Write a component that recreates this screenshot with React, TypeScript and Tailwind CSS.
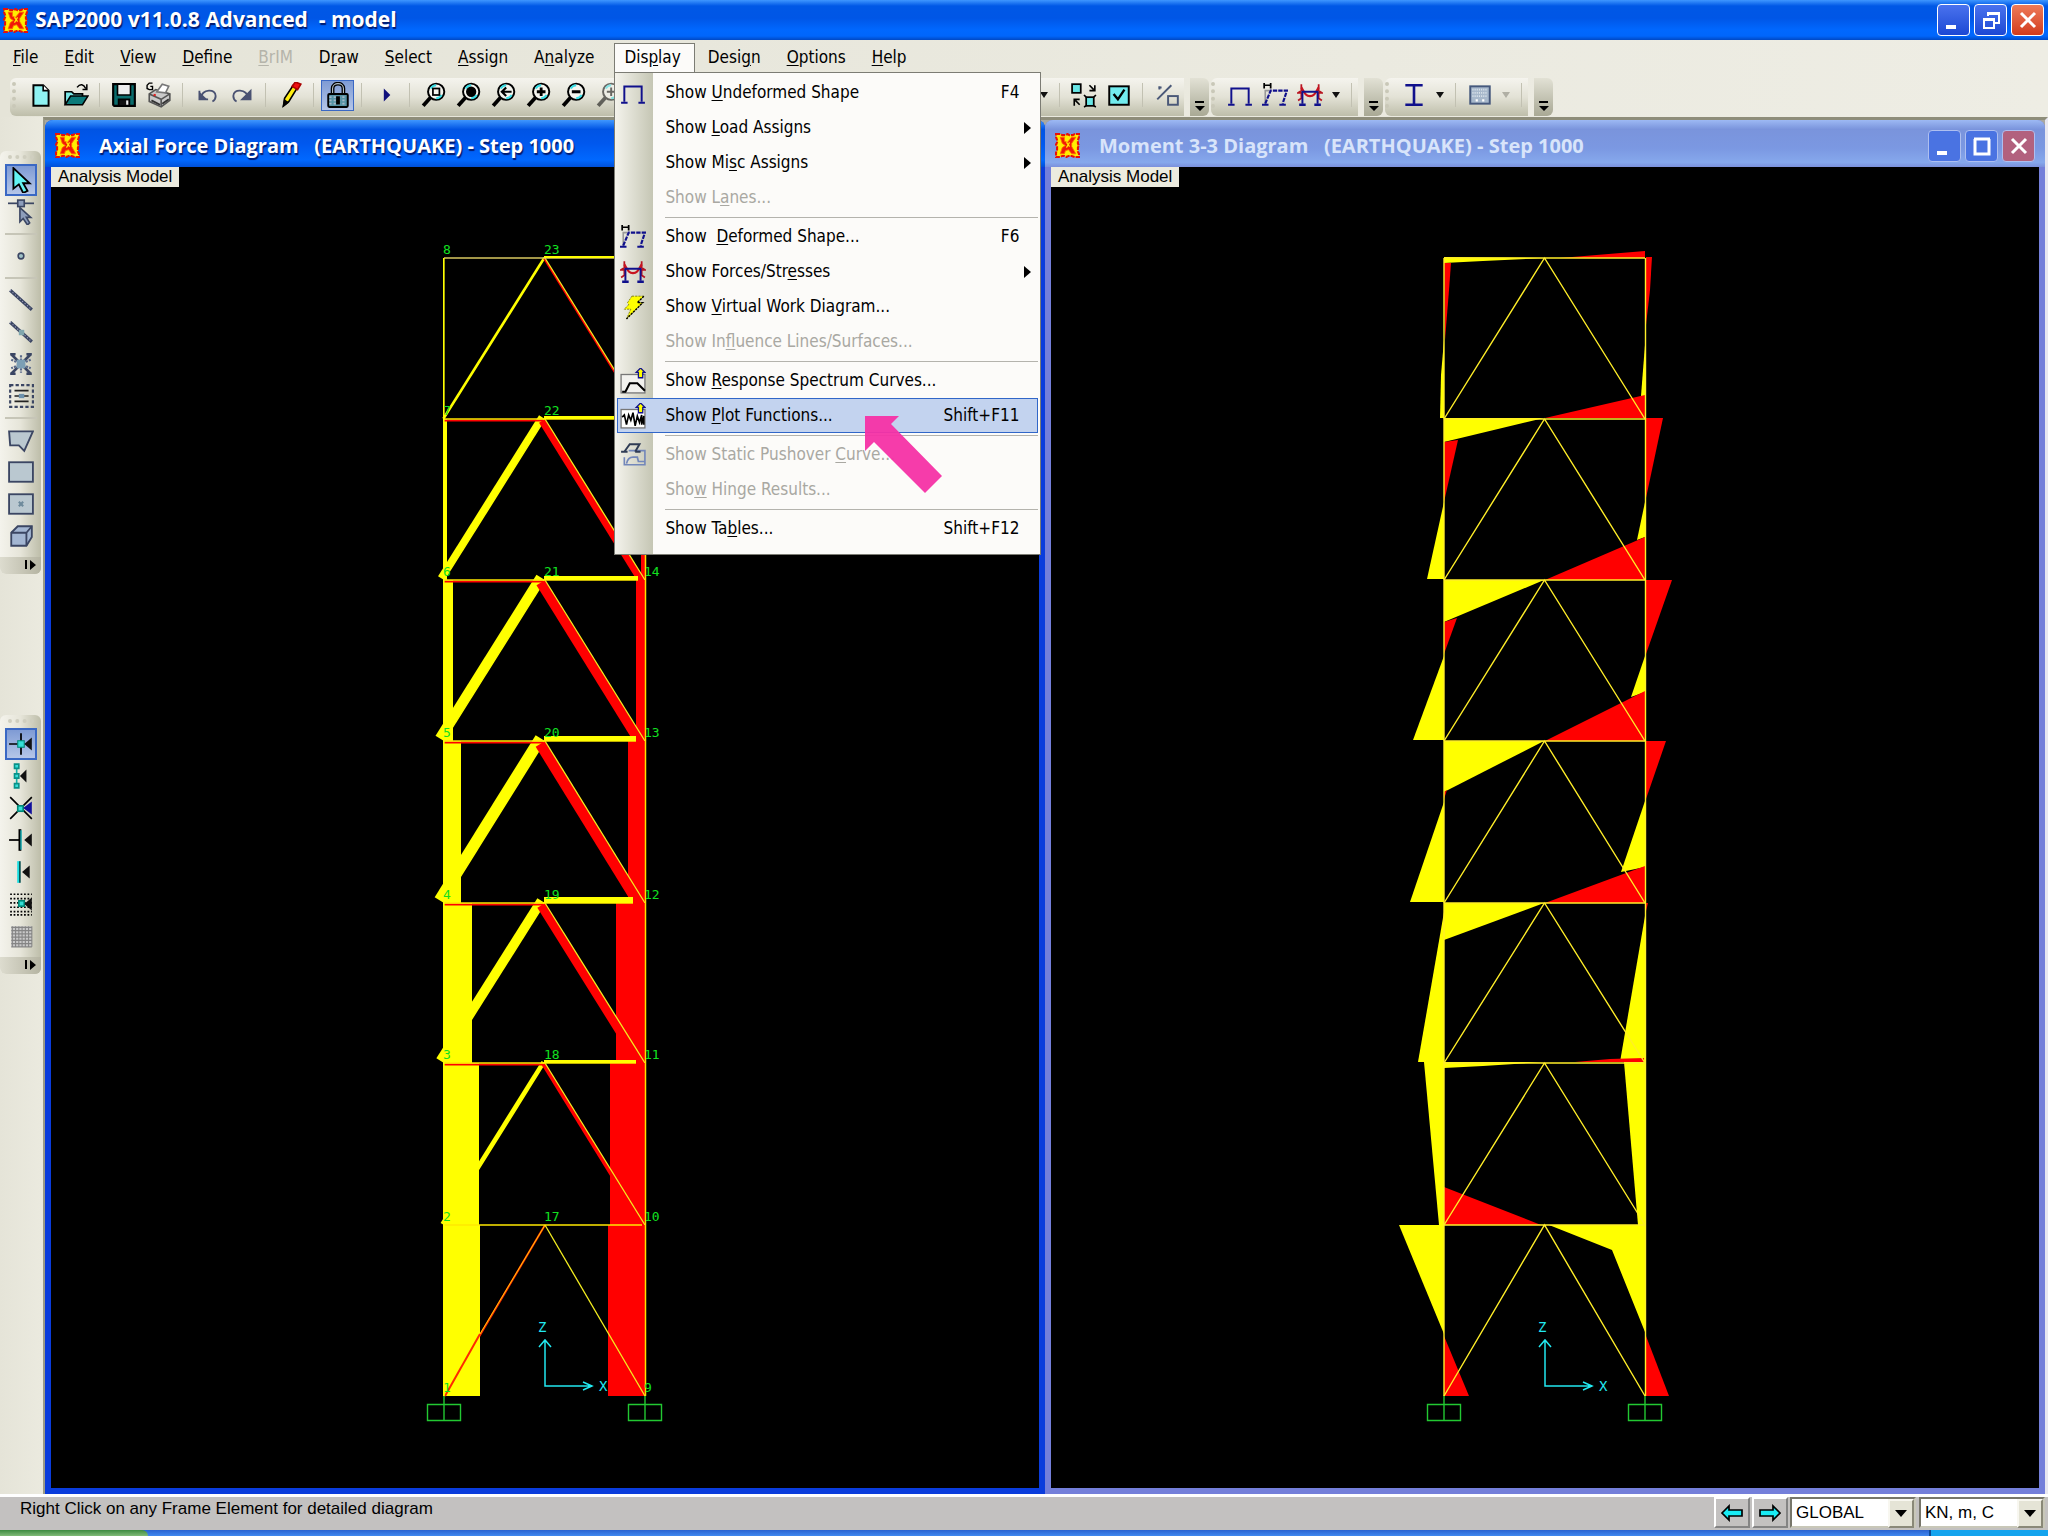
import type { ReactNode } from 'react'

type IconProps = { children: ReactNode; size?: number }

function Pix({ children, size = 26 }: IconProps) {
  return (
    <svg width={size} height={size} viewBox="0 0 24 24" fill="none" stroke="#000" strokeWidth="1.5" aria-hidden="true">
      {children}
    </svg>
  )
}

function AppLogo() {
  return (
    <svg width="25" height="25" viewBox="0 0 24 24" aria-hidden="true" className="shrink-0">
      <path
        d="M1 1h4l2 1h3l2-1 2 1h3l2-1h4v3l-1 3v3l1 2-1 2v4l1 2v3h-4l-3-1h-3l-2 1-2-1H7l-2 1H1v-4l1-3v-3l-1-2 1-2V7L1 4Z"
        fill="#ffee00"
        stroke="#e81008"
        strokeWidth="2"
        strokeDasharray="4 1"
      />
      <path d="M5 4h4v4l3 1 4-5h4l-4 6v3l4 7h-4l-3-4-3 1-1 3H5l2-6 3-2-3-2Z" fill="#f01808" stroke="#ff6a00" strokeWidth="0.8" />
      <path d="M11 9l3 4M14 9l-3 5" stroke="#ffee00" strokeWidth="1.2" />
    </svg>
  )
}

function Magnifier({ children, faded }: { children?: ReactNode; faded?: boolean }) {
  return (
    <Pix>
      <g opacity={faded ? 0.55 : 1}>
        <path d="M9 14 2 22" strokeWidth="3.4" />
        <circle cx="14" cy="9" r="7.5" fill="#f4f4ee" strokeWidth="1.8" />
        <path d="M9 6a6 6 0 0 1 5-3M19 12a6 6 0 0 1-5 3" stroke="#38dfe6" strokeWidth="2" />
        {children}
      </g>
    </Pix>
  )
}

function FrameIcon() {
  return (
    <Pix>
      <path d="M4 20V6h16v14" stroke="#10108c" strokeWidth="1.8" />
      <path d="M1 21h6M17 21h6" stroke="#10108c" strokeWidth="2" />
    </Pix>
  )
}

function DeformedIcon() {
  return (
    <Pix>
      <path d="M2 1v5M8 1v5M2 3h6" strokeWidth="1.6" />
      <path d="M3 20V8h4" stroke="#999" />
      <path d="M3 20 8 8h15l-4 12" stroke="#10108c" strokeWidth="2" strokeDasharray="4 1" />
      <path d="M0 21h6M16 21h6" stroke="#10108c" strokeWidth="2" />
    </Pix>
  )
}

function ForcesIcon() {
  return (
    <Pix>
      <path d="M4 2v6l-3 2h3v5l-3 2M20 2v6l3 2h-3v5l3 2" stroke="#b81420" strokeWidth="1.6" />
      <path d="M4 5c3 5 4 8 8 8s5-3 8-8" stroke="#c81420" strokeWidth="2" />
      <path d="M5 20V9h14v11" stroke="#10108c" strokeWidth="1.8" />
      <path d="M2 21h6M16 21h6" stroke="#10108c" strokeWidth="2.2" />
    </Pix>
  )
}

function BoltIcon() {
  return (
    <Pix>
      <path d="M11 2h11l-6 6h5L6 23l4-9H4l4-4-1-2Z" fill="#ffff00" stroke="#777700" strokeWidth="0.8" strokeDasharray="2 1" />
      <path d="m22 2-6 6h5L6 23" strokeWidth="1.3" strokeDasharray="2 1" />
    </Pix>
  )
}

function ChartArrow() {
  return <path d="m19 0 4 4h-2v5h-4V4h-2Z" fill="#ffff00" stroke="#10108c" strokeWidth="1.2" />
}

function SpectrumIcon() {
  return (
    <Pix>
      <rect x="1" y="6" width="22" height="17" fill="#f2f2ee" stroke="#777" strokeWidth="1.2" />
      <path d="M2 22h3l4-8h7l7 7" strokeWidth="1.9" />
      <ChartArrow />
    </Pix>
  )
}

function PlotIcon() {
  return (
    <Pix>
      <rect x="1" y="6" width="22" height="17" fill="#fff" stroke="#777" strokeWidth="1.2" />
      <path d="m2 13 2-2 2 9 2-9 2 5 2-7 2 12 2-9 2 6 2-7v9l2-8v8" strokeWidth="1.5" />
      <ChartArrow />
    </Pix>
  )
}

function PushoverIcon() {
  return (
    <Pix>
      <path d="M8 8h15v13H4v-7" stroke="#7387ba" strokeWidth="1.5" />
      <path d="M6 20c1-5 4-6 6-6h4l1 4h6" stroke="#7387ba" strokeWidth="1.6" />
      <path d="M1 9h6M14 9h5M4 9l5-7h9l-4 7" stroke="#303c55" strokeWidth="1.8" />
    </Pix>
  )
}

const newIcon = (
  <Pix>
    <path d="M5 3h9l5 5v14H5Z" fill="#8ff2f2" strokeWidth="1.8" />
    <path d="M14 3v5h5" fill="#fff" strokeWidth="1.5" />
  </Pix>
)
const openIcon = (
  <Pix>
    <path d="M2 21V9h6l2 2h8v3" fill="#7be8e8" strokeWidth="1.6" />
    <path d="m2 21 5-8h16l-5 8Z" fill="#0b7a7a" strokeWidth="1.4" />
    <path d="M13 5c3-4 6-3 8 1M22 2v5h-4" strokeWidth="1.4" />
  </Pix>
)
const saveIcon = (
  <Pix>
    <path d="M2 2h20v20H3l-1-1Z" fill="#0a6c6c" strokeWidth="2" />
    <path d="M6 2h12v10H6Z" fill="#eee" />
    <path d="M7 16h10v6H7Z" fill="#111" />
    <path d="M14 17h2v4h-2Z" fill="#eee" stroke="none" />
  </Pix>
)
const printIcon = (
  <Pix>
    <path d="M3 11 9 7l13 4v6l-8 6-11-5Z" fill="#c9c9c9" stroke="#555" />
    <path d="m3 11 11 5 8-5M14 16v7" stroke="#555" />
    <path d="m10 9 5-7 6 2-3 6Z" fill="#fff" stroke="#777" />
    <path d="M6 1H3L1 3v3l2 1h3V4H4" strokeWidth="1.3" />
    <path d="M5 17l8 4M15 20l6-4" stroke="#333" strokeWidth="1.7" />
    <path d="M7 12h2" stroke="#e02020" strokeWidth="2" />
  </Pix>
)
const undoIcon = (
  <Pix>
    <path d="M5 8v8h8M6 15c2-9 14-9 14-2 0 2-1 4-3 5" stroke="#4a5272" strokeWidth="1.7" />
    <path d="M5 9v7h7Z" fill="#4a5272" stroke="none" />
  </Pix>
)
const redoIcon = (
  <Pix>
    <path d="M18 15C16 6 4 6 4 13c0 2 1 4 3 5" stroke="#4a5272" strokeWidth="1.7" />
    <path d="M20 8v8h-8Z" fill="#4a5272" stroke="#4a5272" />
  </Pix>
)
const pencilIcon = (
  <Pix>
    <path d="m6 22 1-7 8-12 4 2-8 13Z" fill="#ffee10" strokeWidth="1.5" />
    <path d="m14 4 3-4 5 2-3 5Z" fill="#f01010" stroke="#a00" />
    <path d="m6 22 1-5 3 2Z" fill="#000" />
  </Pix>
)
const lockIcon = (
  <Pix>
    <path d="M7 11V6c0-6 10-6 10 0v5" strokeWidth="3.4" />
    <path d="M7 11V6c0-6 10-6 10 0v5" stroke="#b8c4cc" strokeWidth="1" />
    <rect x="3" y="11" width="18" height="12" rx="1" fill="#5794a6" strokeWidth="1.8" />
    <path d="M4 14h16M4 17h16M4 20h16" stroke="#a5b7c8" strokeDasharray="2 2" />
    <path d="M11 14h2v6h-2Z" fill="#000" />
  </Pix>
)
const runIcon = (
  <Pix>
    <path d="m10 6 6 6-6 6Z" fill="#10107c" stroke="none" />
  </Pix>
)
const shrinkIcon = (
  <Pix>
    <rect x="1" y="2" width="8" height="8" fill="#68e6e6" strokeWidth="1.6" />
    <rect x="14" y="14" width="7" height="8" fill="#68e6e6" strokeWidth="1.6" />
    <path d="M17 3l4 4M22 3v5h-5M12 12l2 2M21 14l2-2M12 23l2-1M21 22l2 1M8 21l-4-4M3 22v-6h5" strokeWidth="1.5" />
  </Pix>
)
const checkIcon = (
  <Pix>
    <rect x="3" y="4" width="18" height="17" fill="#72ecef" strokeWidth="1.8" />
    <path d="m7 11 4 5 6-9" strokeWidth="2.2" />
  </Pix>
)
const percentIcon = (
  <Pix>
    <path d="M3 16 16 3M4 5h3M5 4v3" stroke="#4a5878" strokeWidth="1.8" />
    <rect x="13" y="13" width="9" height="8" stroke="#4a5878" strokeWidth="1.8" />
  </Pix>
)
const beamIcon = (
  <Pix>
    <path d="M4 3h16M4 21h16M12 3v18" stroke="#10108c" strokeWidth="2.4" />
  </Pix>
)
const sectionIcon = (
  <Pix>
    <rect x="3" y="4" width="18" height="16" fill="#a7b8cb" stroke="#45587c" strokeWidth="1.8" />
    <path d="M5 7h14M5 10h14M5 13h14" stroke="#d9e2ea" strokeDasharray="1 1" />
    <path d="M8 17h2M14 17h2" stroke="#fff" strokeWidth="2" />
  </Pix>
)

const slate = '#3b4663'

const drawTools: (ReactNode | '|')[] = [
  <Pix key="pointer">
    <path d="M5 1v19l5-4 4 8 4-2-4-7h6Z" fill="#62f3f3" strokeWidth="1.7" />
  </Pix>,
  <Pix key="reshape">
    <path d="M0 4h24" stroke={slate} strokeWidth="1.6" />
    <rect x="9" y="1" width="6" height="6" fill="#8d9dbb" stroke={slate} />
    <path d="M11 8v13l3-3 4 6 2-2-3-5h4Z" fill="#8d9dbb" stroke={slate} />
  </Pix>,
  '|',
  <Pix key="joint">
    <circle cx="12" cy="12" r="2.6" fill="#9fc0c6" stroke={slate} />
  </Pix>,
  '|',
  <Pix key="frame">
    <path d="m2 3 20 18" stroke={slate} strokeWidth="3" />
    <path d="m2 3 20 18" stroke="#a7a5c4" strokeWidth="1" strokeDasharray="1 2" />
  </Pix>,
  <Pix key="quick-frame">
    <path d="m2 3 20 18" stroke={slate} strokeWidth="3" />
    <path d="m2 3 20 18" stroke="#a7a5c4" strokeWidth="1" strokeDasharray="1 2" />
    <rect x="10" y="10" width="5" height="5" fill="#80a6ae" stroke="none" />
  </Pix>,
  <Pix key="brace">
    <path d="m3 3 18 18M21 3 3 21M2 3h5M17 3h5M2 21h5M17 21h5" stroke={slate} strokeWidth="2.4" />
    <path d="M12 4v16M3 8l18 8M21 8 3 16" stroke="#5a6a8a" strokeWidth="2" strokeDasharray="2 1" />
    <rect x="8" y="8" width="8" height="8" fill="#7c9fb5" stroke="none" />
  </Pix>,
  <Pix key="beams">
    <rect x="2" y="2" width="21" height="20" stroke={slate} strokeWidth="2" strokeDasharray="3 2" />
    <path d="M6 7h13M6 12h13M6 17h13" stroke="#222" strokeWidth="1.5" />
    <rect x="10" y="10" width="5" height="4" fill="#6d92ad" stroke="none" />
  </Pix>,
  '|',
  <Pix key="poly">
    <path d="M1 4h22l-8 18-5-5H2Z" fill="#bac8d0" stroke={slate} strokeWidth="1.7" />
  </Pix>,
  <Pix key="rect">
    <rect x="1" y="3" width="22" height="18" fill="#bac8d0" stroke={slate} strokeWidth="1.7" />
  </Pix>,
  <Pix key="quick-area">
    <rect x="1" y="3" width="22" height="18" fill="#bac8d0" stroke={slate} strokeWidth="1.7" />
    <path d="m10 10 4 4M14 10l-4 4" stroke="#6e8a9c" strokeWidth="2" />
  </Pix>,
  <Pix key="solid">
    <path d="M3 9 9 3h13v10l-5 8H3Z" fill="#a3b6d2" stroke={slate} strokeWidth="1.7" />
    <path d="M3 9h14v12M17 9l5-6" stroke={slate} strokeWidth="1.7" />
  </Pix>,
]

const snapArrow = <path d="m15 12 7-6v12Z" fill="#111" stroke="none" />

const snapTools: ReactNode[] = [
  <Pix key="points">
    <path d="M1 12h8M12 2v20" strokeWidth="1.6" />
    <rect x="9" y="9" width="6" height="6" fill="#35e0d8" stroke="#087" strokeWidth="1" />
    {snapArrow}
  </Pix>,
  <Pix key="ends">
    <path d="M8 2v20" stroke="#12b0a8" strokeWidth="1.5" />
    <path d="M6 1h4v4H6ZM6 10h4v4H6ZM6 19h4v4H6Z" fill="#35e0d8" stroke="#0a9088" />
    <path d="m11 12 6-6v12Z" fill="#111" stroke="none" />
  </Pix>,
  <Pix key="intersections">
    <path d="m2 2 20 20M22 2 2 22" strokeWidth="1.5" />
    <rect x="9" y="10" width="5" height="5" fill="#35e0d8" stroke="#087" />
    <path d="m14 12 8-6v12Z" fill="#10109c" stroke="none" />
  </Pix>,
  <Pix key="perpendicular">
    <path d="M1 12h10" strokeWidth="1.6" />
    <path d="M11 2v20" strokeWidth="2.6" />
    <path d="M12 3v18" stroke="#12c0c8" strokeWidth="1.2" />
    {snapArrow}
  </Pix>,
  <Pix key="lines">
    <path d="M10 2v20" stroke="#18dde0" strokeWidth="3" />
    <path d="M11 2v20" strokeWidth="1" />
    <path d="m13 12 7-6v12Z" fill="#111" stroke="none" />
  </Pix>,
  <Pix key="fine">
    <path d="M2 3h20M2 7h20M2 11h20M2 15h20M2 19h20M2 22h20" strokeWidth="1.6" strokeDasharray="1.6 1.6" />
    <rect x="10" y="9" width="5" height="5" fill="#35e0d8" stroke="#087" />
    {snapArrow}
  </Pix>,
  <Pix key="grid">
    <rect x="3" y="3" width="19" height="19" fill="#c9c9c9" stroke="none" />
    <path d="M3 4h19M3 7h19M3 10h19M3 13h19M3 16h19M3 19h19M3 22h19M4 3v19M7 3v19M10 3v19M13 3v19M16 3v19M19 3v19M22 3v19" stroke="#858585" strokeWidth="1" />
  </Pix>,
]

function Mnemonic({ label }: { label: string }) {
  const at = label.indexOf('&')
  if (at < 0) return <span className="whitespace-pre">{label}</span>
  return (
    <span className="whitespace-pre">
      {label.slice(0, at)}
      <span className="underline underline-offset-2">{label[at + 1]}</span>
      {label.slice(at + 2)}
    </span>
  )
}

type MenuEntry = { label: string; shortcut?: string; icon?: ReactNode; sub?: boolean; off?: boolean; active?: boolean } | '|'

const displayMenu: MenuEntry[] = [
  { label: 'Show &Undeformed Shape', shortcut: 'F4', icon: <FrameIcon /> },
  { label: 'Show &Load Assigns', sub: true },
  { label: 'Show Mi&sc Assigns', sub: true },
  { label: 'Show L&anes...', off: true },
  '|',
  { label: 'Show  &Deformed Shape...', shortcut: 'F6', icon: <DeformedIcon /> },
  { label: 'Show Forces/Str&esses', sub: true, icon: <ForcesIcon /> },
  { label: 'Show &Virtual Work Diagram...', icon: <BoltIcon /> },
  { label: 'Show In&fluence Lines/Surfaces...', off: true },
  '|',
  { label: 'Show &Response Spectrum Curves...', icon: <SpectrumIcon /> },
  { label: 'Show &Plot Functions...', shortcut: 'Shift+F11', icon: <PlotIcon />, active: true },
  '|',
  { label: 'Show Static Pushover &Curve...', icon: <PushoverIcon />, off: true },
  { label: 'Sho&w Hinge Results...', off: true },
  '|',
  { label: 'Show Ta&bles...', shortcut: 'Shift+F12' },
]

function DisplayMenu() {
  return (
    <div className="absolute top-full left-[-1px] z-20 w-[427px] border border-[#7c7c74] bg-[linear-gradient(90deg,#f4f3ec_0px,#c5c6b4_38px,#fcfbf9_38px)] pt-[2px] pb-[8px]">
      {displayMenu.map((entry, i) =>
        entry === '|' ? (
          <div key={i} className="mt-[2px] mr-[2px] mb-px ml-[50px] h-px bg-[#b4b3ad]" />
        ) : (
          <button
            key={i}
            type="button"
            disabled={entry.off}
            className={`mx-[2px] flex h-[35px] w-[421px] items-center border text-left ${
              entry.active ? 'border-[#3166c8] bg-[#c3d3ef]' : 'border-transparent'
            } ${entry.off ? 'text-[#a9a8a2]' : 'text-black'}`}
          >
            <span className="flex w-[47px] shrink-0 pl-[2px]">{entry.icon}</span>
            <Mnemonic label={entry.label} />
            {entry.shortcut && <span className="ml-auto pr-[18px]">{entry.shortcut}</span>}
            {entry.sub && (
              <svg width="7" height="12" viewBox="0 0 7 12" className="mr-[6px] ml-auto" aria-hidden="true">
                <path d="M0 0v12l7-6Z" />
              </svg>
            )}
          </button>
        ),
      )}
      <svg width="78" height="78" viewBox="0 0 78 78" className="pointer-events-none absolute top-[343px] left-[250px]" aria-hidden="true">
        <path d="M0 0h34l-8 8 51 52-17 17L9 26 0 35Z" fill="#f531a5" opacity="0.95" />
      </svg>
    </div>
  )
}

const menusBefore = ['&File', '&Edit', '&View', '&Define', '&BrIM', 'D&raw', '&Select', '&Assign', 'A&nalyze']
const menusAfter = ['Desi&gn', '&Options', '&Help']

function MenuButton({ label }: { label: string }) {
  const off = label === '&BrIM'
  return (
    <button type="button" disabled={off} className={`px-[13px] ${off ? 'text-[#b5b4aa]' : 'text-black'}`}>
      <Mnemonic label={label} />
    </button>
  )
}

function MenuBar() {
  return (
    <nav className="flex h-[38px] bg-[linear-gradient(90deg,#e5e4d8,#eeede4)] pt-[3px] pb-[6px]">
      {menusBefore.map((m) => (
        <MenuButton key={m} label={m} />
      ))}
      <div className="relative ml-[7px] flex border border-b-0 border-[#7c7c74] bg-[#fcfbf9]">
        <button type="button" aria-expanded="true" className="pr-[13px] pl-[9px]">
          <Mnemonic label="Dis&play" />
        </button>
        <DisplayMenu />
      </div>
      {menusAfter.map((m) => (
        <MenuButton key={m} label={m} />
      ))}
    </nav>
  )
}

function ToolButton({ label, active, children }: { label: string; active?: boolean; children: ReactNode }) {
  return (
    <button
      type="button"
      aria-label={label}
      className={`mx-px flex h-[31px] w-[33px] shrink-0 items-center justify-center ${
        active ? 'border border-[#3a68c4] bg-linear-to-b from-[#7f9bd4] to-[#b5c6e8]' : ''
      }`}
    >
      {children}
    </button>
  )
}

function Caret({ faded }: { faded?: boolean }) {
  return (
    <svg width="18" height="8" viewBox="0 0 18 8" className="shrink-0" aria-hidden="true">
      <path d="M5 1h8L9 7Z" fill={faded ? '#b0afa4' : '#111'} />
    </svg>
  )
}

function Sep() {
  return <div className="mx-[6px] h-[24px] w-px shrink-0 bg-[#c2c1b2]" />
}

function Grip() {
  return <div className="mr-[4px] h-[26px] w-[7px] shrink-0 border-l-4 border-dotted border-[#c9c8b8]" />
}

function Overflow() {
  return (
    <button type="button" aria-label="Toolbar options" className="ml-[6px] flex w-[19px] shrink-0 items-end justify-center self-stretch rounded-r-md bg-linear-to-b from-[#e2e1d5] to-[#a9a995] pb-[4px]">
      <svg width="12" height="12" viewBox="0 0 12 12" aria-hidden="true">
        <path d="M1 1h9v2H1ZM1 6h10l-5 5Z" />
      </svg>
    </button>
  )
}

const strip = 'flex h-[38px] items-center rounded-l-md bg-linear-to-b from-[#f5f4ee] via-[#e3e2d6] to-[#bebeaa] pb-[4px]'

function Toolbars() {
  return (
    <div className="flex h-[39px] overflow-hidden bg-[linear-gradient(90deg,#e5e4d8,#eeede4)] pl-[10px]">
      <div className={`${strip} pl-[2px]`}>
        <Grip />
        <ToolButton label="New model">{newIcon}</ToolButton>
        <ToolButton label="Open">{openIcon}</ToolButton>
        <Sep />
        <ToolButton label="Save">{saveIcon}</ToolButton>
        <ToolButton label="Print graphics">{printIcon}</ToolButton>
        <Sep />
        <ToolButton label="Undo">{undoIcon}</ToolButton>
        <ToolButton label="Redo">{redoIcon}</ToolButton>
        <Sep />
        <ToolButton label="Refresh window">{pencilIcon}</ToolButton>
        <Sep />
        <ToolButton label="Lock model" active>
          {lockIcon}
        </ToolButton>
        <Sep />
        <ToolButton label="Run analysis">{runIcon}</ToolButton>
        <Sep />
        <ToolButton label="Rubber band zoom">
          <Magnifier>
            <rect x="11" y="6" width="6" height="6" strokeWidth="1.6" />
          </Magnifier>
        </ToolButton>
        <ToolButton label="Restore full view">
          <Magnifier>
            <circle cx="14" cy="9" r="4" fill="#000" />
          </Magnifier>
        </ToolButton>
        <ToolButton label="Previous zoom">
          <Magnifier>
            <path d="M10 9h9M14 5l-4 4 4 4" strokeWidth="2" />
          </Magnifier>
        </ToolButton>
        <ToolButton label="Zoom in">
          <Magnifier>
            <path d="M10 9h8M14 5v8" strokeWidth="2.6" />
          </Magnifier>
        </ToolButton>
        <ToolButton label="Zoom out">
          <Magnifier>
            <path d="M10 9h8" strokeWidth="2.8" />
          </Magnifier>
        </ToolButton>
        <ToolButton label="Pan">
          <Magnifier faded>
            <path d="M10 9h8M14 5v8" strokeWidth="1.8" />
          </Magnifier>
        </ToolButton>
        <div className="w-[409px] shrink-0" />
        <Caret />
        <Sep />
        <ToolButton label="Shrink objects">{shrinkIcon}</ToolButton>
        <ToolButton label="Display options">{checkIcon}</ToolButton>
        <Sep />
        <ToolButton label="Assign to group">{percentIcon}</ToolButton>
      </div>
      <div className="flex pb-px">
        <Overflow />
      </div>
      <div className={`${strip} ml-[2px]`}>
        <Grip />
        <ToolButton label="Show undeformed shape">
          <FrameIcon />
        </ToolButton>
        <ToolButton label="Show deformed shape">
          <DeformedIcon />
        </ToolButton>
        <ToolButton label="Show forces">
          <ForcesIcon />
        </ToolButton>
        <Caret />
        <Sep />
      </div>
      <div className="flex pb-px">
        <Overflow />
      </div>
      <div className={`${strip} ml-[2px]`}>
        <Grip />
        <ToolButton label="Steel design">{beamIcon}</ToolButton>
        <Caret />
        <Sep />
        <ToolButton label="Concrete design">{sectionIcon}</ToolButton>
        <Caret faded />
        <Sep />
      </div>
      <div className="flex pb-px">
        <Overflow />
      </div>
    </div>
  )
}

function SideStrip({ tools, name }: { tools: (ReactNode | '|')[]; name: string }) {
  return (
    <div role="toolbar" aria-label={name} className="flex w-[41px] flex-col items-center rounded-md bg-linear-to-r from-[#f4f3ec] via-[#e6e5d9] to-[#bdbda9]">
      <div className="mt-[4px] mb-[5px] h-[4px] w-[26px] border-t-4 border-dotted border-[#cfcebf]" />
      {tools.map((tool, i) =>
        tool === '|' ? (
          <div key={i} className="my-[5px] h-[2px] w-[32px] bg-[#c6c5b7]" />
        ) : (
          <button
            key={i}
            type="button"
            aria-label={`${name} ${i + 1}`}
            className={`flex h-[32px] w-[32px] items-center justify-center ${
              i === 0 ? 'border-2 border-[#3a68c4] bg-linear-to-b from-[#7f9bd4] to-[#b5c6e8]' : ''
            }`}
          >
            {tool}
          </button>
        ),
      )}
      <div className="mt-[5px] flex h-[17px] w-full justify-end rounded-b-md bg-linear-to-r from-[#dddccf] to-[#b5b4a2] pt-[3px] pr-[4px]">
        <svg width="12" height="10" viewBox="0 0 12 10" aria-hidden="true">
          <path d="M0 0h2v9H0ZM5 0v10l6-5Z" />
        </svg>
      </div>
    </div>
  )
}

const LEFT = 444
const MID = 545
const RIGHT = 645
const levels = [258, 419, 580, 741, 903, 1063, 1225, 1396]

// Bays run from the roof to the base
const axial = [
  { col: 0, red: 0, beam: 2, beamEnd: 645, brace: 2 },
  { col: 3, red: 4, beam: 3, beamEnd: 642, brace: 7 },
  { col: 9, red: 9, beam: 4, beamEnd: 638, brace: 10 },
  { col: 17, red: 17, beam: 5, beamEnd: 636, brace: 11 },
  { col: 28, red: 29, beam: 6, beamEnd: 633, brace: 9 },
  { col: 35, red: 35, beam: 3, beamEnd: 636, brace: 4 },
  { col: 36, red: 37, beam: 0, beamEnd: 642, brace: 0 },
]

const nodeLabels: [number, string[]][] = [
  [443, ['8', '7', '6', '5', '4', '3', '2', '1']],
  [544, ['23', '22', '21', '20', '19', '18', '17']],
  [644, ['16', '15', '14', '13', '12', '11', '10', '9']],
]

function Supports() {
  return (
    <g stroke="#22c832" strokeWidth="1.4" fill="none">
      {[LEFT, RIGHT].map((x) => (
        <path key={x} d={`M${x - 16.5} 1404.5h33v16h-33ZM${x} 1396v24`} />
      ))}
    </g>
  )
}

function Axes() {
  return (
    <g>
      <path d="M545 1340v46h46M539 1347l6-7 6 7M583 1382l9 4-9 4" stroke="#22e8f0" strokeWidth="1.5" fill="none" />
      <text x="538" y="1332" fill="#22e8f0" className="font-['DejaVu_Sans_Mono',monospace] text-[14px]">
        Z
      </text>
      <text x="599" y="1391" fill="#22e8f0" className="font-['DejaVu_Sans_Mono',monospace] text-[14px]">
        X
      </text>
    </g>
  )
}

function AxialDiagram() {
  return (
    <svg viewBox="51 187 988 1301" className="block min-h-0 w-full flex-1" role="img" aria-label="Axial force diagram">
      {axial.map((bay, i) => {
        const top = levels[i]
        const bottom = levels[i + 1]
        const base = i === 6
        const nx = bay.brace * 0.85
        const ny = bay.brace * 0.53
        return (
          <g key={i}>
            <path d={`M${MID} ${top}L${LEFT} ${bottom}l${-nx} ${-ny}L${MID - nx} ${top - ny}Z`} fill="#ffff00" />
            <path d={`M${MID} ${top}L${LEFT} ${bottom}`} stroke={base ? '#ff2a00' : '#ffff00'} strokeWidth={base ? 2 : 1.4} />
            <rect x={LEFT - 1} y={top} width={bay.col + 1} height={bottom - top} fill="#ffff00" />
            <rect x={RIGHT - bay.red} y={top} width={bay.red} height={bottom - top} fill="#ff0000" />
            <path d={`M${MID} ${top}L${RIGHT} ${bottom}l${-nx} ${ny}L${MID - nx} ${top + ny}Z`} fill="#ff0000" />
            <path d={`M${MID} ${top}L${RIGHT} ${bottom}`} stroke="#f4ee20" strokeWidth="1.3" />
            {base && <path d={`M${MID} ${top}L${LEFT + 36} 1334`} stroke="#ffcc00" />}
            {base && <path d={`M${LEFT + 1} ${bottom}L${LEFT + 36} 1334`} stroke="#ff2a00" strokeWidth="2" />}
          </g>
        )
      })}
      {axial.map((bay, i) => (
        <g key={i}>
          {i > 0 && i < 6 && <path d={`M${LEFT} ${levels[i] + 1.5}H${MID - 2}`} stroke="#ff0000" strokeWidth="2" />}
          <path d={`M${LEFT} ${levels[i]}H${bay.beamEnd}`} stroke={i === 0 ? '#d8c860' : '#ffe800'} strokeWidth="1.4" />
          <rect x={MID - 1} y={levels[i] - bay.beam} width={bay.beamEnd - MID + 1} height={bay.beam} fill="#ffff00" />
        </g>
      ))}
      <path d="M444 258v1138" stroke="#ffff00" strokeWidth="1.3" />
      <path d="M645.5 258v1138" stroke="#ffe000" strokeWidth="1.5" />
      <g fill="#12e020" className="font-['DejaVu_Sans_Mono',monospace] text-[13px]">
        {nodeLabels.map(([x, names]) =>
          names.map((n, i) => (
            <text key={n} x={x} y={levels[i] - 4}>
              {n}
            </text>
          )),
        )}
      </g>
      <Supports />
      <Axes />
    </svg>
  )
}

const yellowMoments = [
  '444,257 544,258 483,261 444,263',
  '444,340 441,375 440,418 444,418',
  '645,345 643,370 641,396 645,396',
  '444,418 544,418 444,442',
  '444,502 427,579 444,579',
  '645,502 637,540 645,537',
  '444,580 544,580 444,622',
  '444,656 413,740 444,740',
  '645,656 631,697 645,692',
  '444,741 544,741 444,792',
  '444,802 410,902 444,902',
  '645,801 621,872 645,867',
  '444,903 544,903 444,940',
  '444,912 418,1062 444,1062',
  '645,916 620,1062 645,1062',
  '444,1062 544,1062 483,1066 444,1068',
  '424,1062 444,1062 444,1225 439,1225',
  '624,1062 645,1062 645,1225 638,1225',
  '399,1225 444,1225 444,1334',
  '549,1225 645,1225 645,1332 612,1250',
]

const redMoments = [
  '560,258 645,251 645,258',
  '444,263 451,263 449,290 445,340',
  '646,257 652,257 650,290 646,325',
  '545,418 645,395 645,418',
  '444,442 458,440 444,502',
  '646,418 663,418 646,498',
  '545,580 645,537 645,580',
  '444,622 457,618 444,654',
  '646,580 672,580 646,654',
  '545,741 645,691 645,741',
  '444,792 447,790 444,799',
  '646,741 666,741 646,799',
  '545,903 645,866 645,903',
  '646,903 648,903 646,911',
  '575,1062 610,1059 644,1058 644,1062',
  '444,1187 541,1225 444,1225',
  '444,1336 469,1396 444,1396',
  '646,1336 669,1396 646,1396',
]

function MomentDiagram() {
  return (
    <svg viewBox="51 187 988 1301" className="block min-h-0 w-full flex-1" role="img" aria-label="Moment 3-3 diagram">
      {yellowMoments.map((p) => (
        <polygon key={p} points={p} fill="#ffff00" />
      ))}
      {redMoments.map((p) => (
        <polygon key={p} points={p} fill="#ff0000" />
      ))}
      <g stroke="#ffee28" strokeWidth="1.4" fill="none">
        {levels.slice(0, 7).map((y, i) => (
          <path key={y} d={`M${LEFT} ${y}H${RIGHT}M${LEFT} ${levels[i + 1]}L${MID - 0.5} ${y}L${RIGHT} ${levels[i + 1]}`} />
        ))}
        <path d={`M${LEFT} 258v1138M${RIGHT + 0.5} 258v1138`} />
      </g>
      <Supports />
      <Axes />
    </svg>
  )
}

const captionBlue = 'bg-linear-to-b from-[#4a72ee] to-[#1c48d4]'
const captionRed = 'bg-linear-to-b from-[#ee7a58] to-[#d2391a]'

function CaptionButton({ kind, muted }: { kind: 'min' | 'max' | 'restore' | 'close'; muted?: boolean }) {
  const fill = kind === 'close' ? (muted ? 'bg-[#b2617e]' : captionRed) : muted ? 'bg-[#4a73e2]' : captionBlue
  return (
    <button
      type="button"
      aria-label={kind}
      className={`flex h-[32px] w-[33px] items-center justify-center rounded-[4px] border ${muted ? 'border-[#aebff0]' : 'border-white'} ${fill}`}
    >
      <svg width="22" height="22" viewBox="0 0 22 22" fill="none" stroke="#fff" strokeWidth="2" aria-hidden="true">
        {kind === 'min' && <path d="M3 18h10" strokeWidth="4" />}
        {kind === 'max' && <path d="M3 4h16M4 4v15h14V4" strokeWidth="3" />}
        {kind === 'restore' && <path d="M8 7V4h11v10h-4M7 5h12M3 10h11v9H4v-9M3 11h12" />}
        {kind === 'close' && <path d="m4 4 14 14M18 4 4 18" strokeWidth="3" />}
      </svg>
    </button>
  )
}

function ChildWindow({ title, muted, children }: { title: string; muted?: boolean; children: ReactNode }) {
  return (
    <section className={`flex min-w-0 flex-col rounded-t-lg ${muted ? 'bg-[#747fda]' : 'bg-[#0a3cdc]'}`}>
      <header
        className={`flex h-[47px] items-center rounded-t-lg pt-[4px] pl-[10px] ${
          muted
            ? 'bg-[linear-gradient(#9db9f4,#7a94dc_20%,#7b98e2_60%,#86a8ec_90%,#7b90dc)] pr-[10px]'
            : 'bg-[linear-gradient(#3f97ff,#0054e4_20%,#0058ee_50%,#0068ff_85%,#0050d8)]'
        }`}
      >
        <AppLogo />
        <h2
          className={`ml-[19px] flex-1 font-['Open_Sans',sans-serif] text-[20px] font-bold whitespace-pre ${
            muted ? 'text-[#d8e4fa]' : 'text-white [text-shadow:1px_2px_1px_#001a70]'
          }`}
        >
          {title}
        </h2>
        {muted && (
          <div className="flex gap-[4px]">
            <CaptionButton kind="min" muted />
            <CaptionButton kind="max" muted />
            <CaptionButton kind="close" muted />
          </div>
        )}
      </header>
      <div className={`flex min-h-0 flex-1 flex-col border-[6px] border-t-0 ${muted ? 'border-[#747fda]' : 'border-[#0a3cdc]'}`}>
        <div className="flex min-h-0 flex-1 flex-col bg-black">
          <p className="h-[20px] w-[128px] bg-[#ecebdf] pl-[7px] font-['Liberation_Sans',sans-serif] text-[17px] leading-[20px]">Analysis Model</p>
          {children}
        </div>
      </div>
    </section>
  )
}

function StatusSelect({ label, value }: { label: string; value: string }) {
  return (
    <div className="relative mr-[3px]">
      <select
        aria-label={label}
        defaultValue={value}
        className="block h-[31px] w-[126px] appearance-none rounded-none border-2 border-t-[#77766a] border-r-[#c8c7b8] border-b-[#c8c7b8] border-l-[#77766a] bg-white pl-[4px] font-['Liberation_Sans',sans-serif] text-[17px]"
      >
        <option>{value}</option>
      </select>
      <span className="pointer-events-none absolute inset-y-[2px] right-[2px] flex w-[26px] items-center justify-center border-2 border-t-[#f8f7f0] border-r-[#8a8978] border-b-[#8a8978] border-l-[#f8f7f0] bg-[#e5e4d6]">
        <svg width="12" height="7" viewBox="0 0 12 7" aria-hidden="true">
          <path d="M0 0h12L6 7Z" />
        </svg>
      </span>
    </div>
  )
}

function ViewStep({ label, path }: { label: string; path: string }) {
  return (
    <button
      type="button"
      aria-label={label}
      className="mr-[2px] flex h-[31px] w-[36px] items-center justify-center border-2 border-t-white border-r-[#848484] border-b-[#848484] border-l-white bg-[#c3c1c0]"
    >
      <svg width="22" height="18" viewBox="0 0 22 18" aria-hidden="true">
        <path d={path} fill="#18ecf4" stroke="#000" strokeWidth="1.7" />
      </svg>
    </button>
  )
}

export default function App() {
  return (
    <div className="flex h-screen flex-col overflow-hidden bg-[#e8e7dc] font-['DejaVu_Sans_Condensed','DejaVu_Sans',sans-serif] text-[17px] text-black">
      <header className="flex h-[40px] shrink-0 items-center bg-[linear-gradient(#3f97ff,#0058e6_15%,#0056e6_45%,#0068ff_75%,#0066fc_90%,#0048c4)] pr-[4px] pl-[3px]">
        <AppLogo />
        <h1 className="ml-[7px] flex-1 font-['Open_Sans',sans-serif] text-[21px] font-bold whitespace-pre text-white [text-shadow:1px_2px_1px_#001a70]">
          {'SAP2000 v11.0.8 Advanced  - model'}
        </h1>
        <div className="flex gap-[4px]">
          <CaptionButton kind="min" />
          <CaptionButton kind="restore" />
          <CaptionButton kind="close" />
        </div>
      </header>

      <MenuBar />
      <Toolbars />

      <main className="flex min-h-0 flex-1">
        <aside className="flex w-[43px] shrink-0 flex-col gap-[141px] bg-linear-to-r from-[#e5e4d8] to-[#ebeadf] pt-[34px]">
          <SideStrip name="Draw" tools={drawTools} />
          <SideStrip name="Snap" tools={snapTools} />
        </aside>
        <div className="grid min-h-0 flex-1 grid-cols-2 grid-rows-1 border-t-[3px] border-r-[3px] border-l-2 border-t-[#8e8d7a] border-r-[#e8e7f0] border-l-[#9b9a88] bg-[#a9a8a0]">
          <ChildWindow title={'Axial Force Diagram   (EARTHQUAKE) - Step 1000'}>
            <AxialDiagram />
          </ChildWindow>
          <ChildWindow title={'Moment 3-3 Diagram   (EARTHQUAKE) - Step 1000'} muted>
            <MomentDiagram />
          </ChildWindow>
        </div>
      </main>

      <footer className="shrink-0">
        <div className="flex h-[36px] border-t-[3px] border-white bg-[#c3c1c0]">
          <p className="flex-1 pl-[20px] font-['Liberation_Sans',sans-serif] text-[17px] leading-[24px]">Right Click on any Frame Element for detailed diagram</p>
          <ViewStep label="Previous view" path="M1 9 8 2v4h13v6H8v4Z" />
          <ViewStep label="Next view" path="M21 9l-7-7v4H1v6h13v4Z" />
          <StatusSelect label="Coordinate system" value="GLOBAL" />
          <StatusSelect label="Units" value="KN, m, C" />
        </div>
        <div className="flex h-[6px] bg-linear-to-b from-[#2a62d0] to-[#4088f0]">
          <div className="w-[148px] rounded-tr-md bg-linear-to-b from-[#3c8a40] to-[#80bb78]" />
          <div className="ml-auto w-[119px] border-l-2 border-[#0c4a98] bg-[#14a4ee]" />
        </div>
      </footer>
    </div>
  )
}
